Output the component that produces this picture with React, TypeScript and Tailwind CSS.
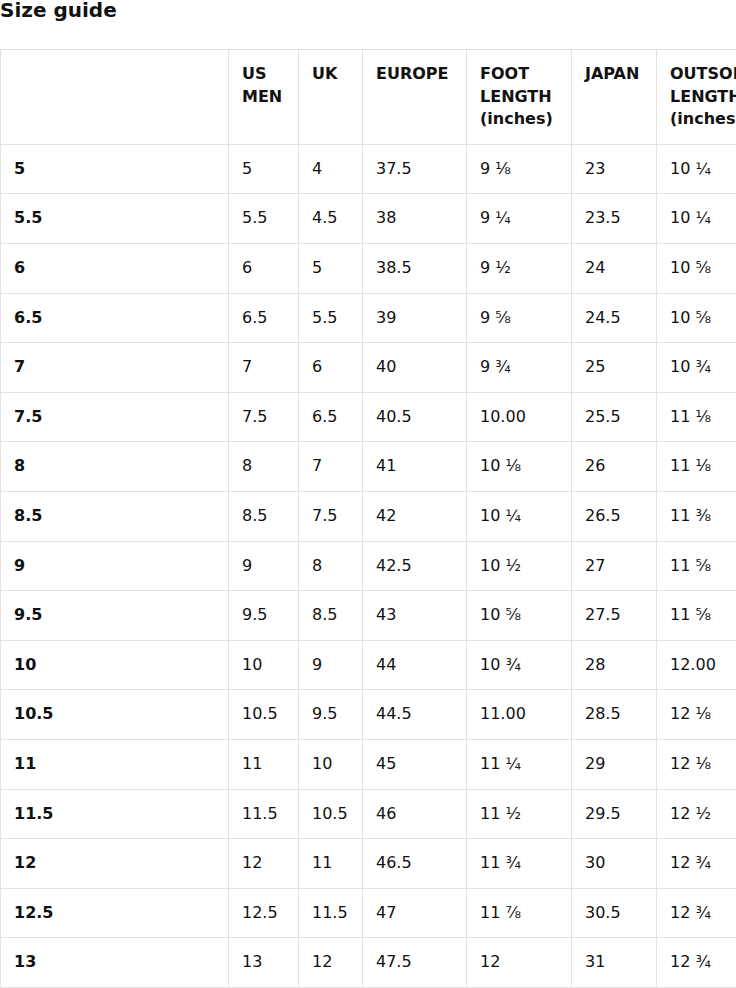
const rows: string[][] = [
  ["5", "5", "4", "37.5", "9 ⅛", "23", "10 ¼"],
  ["5.5", "5.5", "4.5", "38", "9 ¼", "23.5", "10 ¼"],
  ["6", "6", "5", "38.5", "9 ½", "24", "10 ⅝"],
  ["6.5", "6.5", "5.5", "39", "9 ⅝", "24.5", "10 ⅝"],
  ["7", "7", "6", "40", "9 ¾", "25", "10 ¾"],
  ["7.5", "7.5", "6.5", "40.5", "10.00", "25.5", "11 ⅛"],
  ["8", "8", "7", "41", "10 ⅛", "26", "11 ⅛"],
  ["8.5", "8.5", "7.5", "42", "10 ¼", "26.5", "11 ⅜"],
  ["9", "9", "8", "42.5", "10 ½", "27", "11 ⅝"],
  ["9.5", "9.5", "8.5", "43", "10 ⅝", "27.5", "11 ⅝"],
  ["10", "10", "9", "44", "10 ¾", "28", "12.00"],
  ["10.5", "10.5", "9.5", "44.5", "11.00", "28.5", "12 ⅛"],
  ["11", "11", "10", "45", "11 ¼", "29", "12 ⅛"],
  ["11.5", "11.5", "10.5", "46", "11 ½", "29.5", "12 ½"],
  ["12", "12", "11", "46.5", "11 ¾", "30", "12 ¾"],
  ["12.5", "12.5", "11.5", "47", "11 ⅞", "30.5", "12 ¾"],
  ["13", "13", "12", "47.5", "12", "31", "12 ¾"],
];

const headers = ["", "US MEN", "UK", "EUROPE", "FOOT LENGTH (inches)", "JAPAN", "OUTSOLE LENGTH (inches)"];

const cell = "border border-[#e2e2e2] px-[13px] py-[13px] leading-[22.6px] text-left align-top";

export default function App() {
  return (
    <div className="min-h-screen bg-white text-[#111] font-['DejaVu_Sans',sans-serif] overflow-hidden">
      <h2 className="text-[20px] font-bold leading-none mb-[29px]">Size guide</h2>
      <div className="overflow-hidden">
        <table className="table-fixed border-collapse w-[761px] text-[16px]">
          <colgroup>
            <col className="w-[228px]" />
            <col className="w-[70px]" />
            <col className="w-[64px]" />
            <col className="w-[104px]" />
            <col className="w-[105px]" />
            <col className="w-[85px]" />
            <col className="w-[105px]" />
          </colgroup>
          <thead>
            <tr>
              {headers.map((h, i) => (
                <th key={i} className={`${cell} font-bold`}>
                  {h}
                </th>
              ))}
            </tr>
          </thead>
          <tbody>
            {rows.map((r) => (
              <tr key={r[0]}>
                {r.map((v, i) => (
                  <td key={i} className={`${cell} ${i === 0 ? "font-bold" : "font-normal"} whitespace-nowrap`}>
                    {v}
                  </td>
                ))}
              </tr>
            ))}
          </tbody>
        </table>
      </div>
    </div>
  );
}
